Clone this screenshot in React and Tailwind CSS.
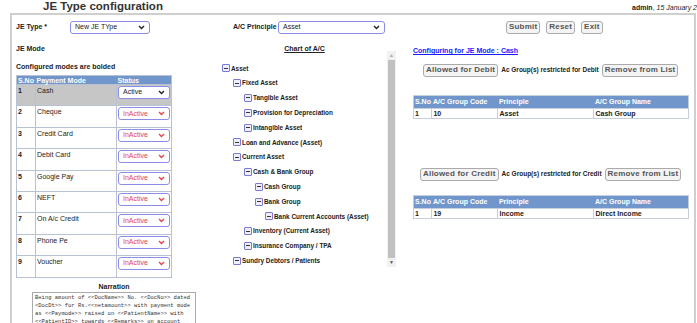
import React from 'react';

const modes = [
  { no: 1, name: 'Cash', status: 'Active' },
  { no: 2, name: 'Cheque', status: 'InActive' },
  { no: 3, name: 'Credit Card', status: 'InActive' },
  { no: 4, name: 'Debit Card', status: 'InActive' },
  { no: 5, name: 'Google Pay', status: 'InActive' },
  { no: 6, name: 'NEFT', status: 'InActive' },
  { no: 7, name: 'On A/c Credit', status: 'InActive' },
  { no: 8, name: 'Phone Pe', status: 'InActive' },
  { no: 9, name: 'Voucher', status: 'InActive' },
];

const tree = [
  ['Asset', 0],
  ['Fixed Asset', 1],
  ['Tangible Asset', 2],
  ['Provision for Depreciation', 2],
  ['Intangible Asset', 2],
  ['Loan and Advance (Asset)', 1],
  ['Current Asset', 1],
  ['Cash & Bank Group', 2],
  ['Cash Group', 3],
  ['Bank Group', 3],
  ['Bank Current Accounts (Asset)', 4],
  ['Inventory (Current Asset)', 2],
  ['Insurance Company / TPA', 2],
  ['Sundry Debtors / Patients', 1],
];

const indents = ['pl-[3px]', 'pl-[14px]', 'pl-[25px]', 'pl-[36px]', 'pl-[46px]'];

const Chevron = ({ color }) => (
  <svg width="7" height="5" viewBox="0 0 7 5">
    <path d="M1 1l2.5 2.5L6 1" fill="none" stroke={color} strokeWidth="1.4" />
  </svg>
);

const Select = ({ value, width, red }) => (
  <div
    className={`${width} h-[13px] flex items-center justify-between px-[4px] border-[1.5px] border-[#8c8ce6] rounded-[3px] bg-white`}
  >
    <span className={red ? 'text-[#e8434b] text-[7px]' : 'text-[#222] text-[7px]'}>{value}</span>
    <Chevron color={red ? '#e8434b' : '#222'} />
  </div>
);

const Btn = ({ children }) => (
  <span className="inline-flex items-center whitespace-nowrap h-[13px] px-[2px] border border-[#aaa] rounded-[3px] bg-[#f4f4f4] text-[#555] font-bold text-[8px] tracking-[0.2px]">
    {children}
  </span>
);

const Minus = () => (
  <span className="w-[8px] h-[8px] mr-[1px] border border-[#7a7ad0] rounded-[1px] bg-[#eef] flex items-center justify-center shrink-0">
    <span className="w-[4px] h-[1px] bg-[#333]" />
  </span>
);

const GroupTable = ({ row }) => (
  <table className="w-[276px] border-collapse border border-[#c8cfdc] text-[7px]">
    <thead>
      <tr className="bg-[#7096cb] text-white font-bold h-[13px] text-left">
        <th className="w-[17px] px-[1px]">S.No</th>
        <th className="w-[66px] px-[1px]">A/C Group Code</th>
        <th className="w-[96px] px-[1px]">Principle</th>
        <th className="px-[1px]">A/C Group Name</th>
      </tr>
    </thead>
    <tbody>
      <tr className="h-[10px] font-bold text-[#222]">
        {row.map((c, i) => (
          <td key={i} className="px-[1px] border border-[#c8cfdc] leading-none">{c}</td>
        ))}
      </tr>
    </tbody>
  </table>
);

export default function App() {
  return (
    <div className="w-[697px] h-[323px] overflow-hidden bg-white text-[#222] text-[7px] font-['Liberation_Sans',Arial,sans-serif]">
      <div className="flex items-start h-[13px] overflow-hidden">
        <h1 className="ml-[43px] w-[589px] shrink-0 text-[11.5px] font-bold text-[#333] leading-[12px]">JE Type configuration</h1>
        <div className="mt-[3px] whitespace-nowrap text-[7px] shrink-0">
          <b>admin</b>, <i>15 January 2025</i>
        </div>
      </div>

      <div className="ml-[10px] w-[686px] h-[320px] border-t-2 border-l-2 border-r-2 border-[#cfcfcf] pl-[4px]">
        <div className="flex items-center mt-[5px] h-[14px]">
          <span className="w-[54px] font-bold">JE Type *</span>
          <Select value="New JE TYpe" width="w-[80px]" />
          <span className="ml-[83px] w-[45px] font-bold">A/C Principle</span>
          <Select value="Asset" width="w-[107px]" />
          <div className="ml-[121px] flex gap-[6px]">
            <Btn>Submit</Btn>
            <Btn>Reset</Btn>
            <Btn>Exit</Btn>
          </div>
        </div>

        <div className="flex mt-[11px]">
          <div className="w-[203px]">
            <div className="font-bold h-[8px] leading-[8px]">JE Mode</div>
            <div className="font-bold mt-[10px] h-[8px] leading-[8px]">Configured modes are bolded</div>
            <table className="mt-[4px] w-[156px] border-collapse border border-[#b9c2d2]">
              <thead>
                <tr className="bg-[#7096cb] text-white font-bold h-[9px] text-left leading-none">
                  <th className="w-[19px] px-[1px]">S.No</th>
                  <th className="w-[81px] px-[1px]">Payment Mode</th>
                  <th className="px-[1px]">Status</th>
                </tr>
              </thead>
              <tbody>
                {modes.map((m) => (
                  <tr key={m.no} className={m.no === 1 ? 'bg-[#c6c6c6] h-[21.4px]' : 'h-[21.4px]'}>
                    <td className="align-top px-[1px] pt-[2px] font-bold border border-[#b9c2d2] leading-none">{m.no}</td>
                    <td className="align-top px-[1px] pt-[2px] border border-[#b9c2d2] leading-none">{m.name}</td>
                    <td className="align-top px-[1px] pt-[1px] border border-[#b9c2d2]">
                      <Select value={m.status} width="w-[52px]" red={m.status === 'InActive'} />
                    </td>
                  </tr>
                ))}
              </tbody>
            </table>
            <div className="ml-[16px] w-[164px] mt-[5px]">
              <div className="text-center font-bold h-[8px] leading-[8px]">Narration</div>
              <div className="mt-[1px] h-[40px] border border-[#aaa] px-[2px] pt-[1px] font-['Liberation_Mono',monospace] text-[5.5px] leading-[8px] text-[#333] whitespace-pre">
                {'Being amount of <<DocName>> No. <<DocNo>> dated\n<DocDt>> for Rs.<<netamount>> with payment mode\nas <<Paymode>> raised on <<PatientName>> with\n<<PatientID>> towards <<Remarks>> on account'}
              </div>
            </div>
          </div>

          <div className="w-[177px] flex h-[222px]">
            <div className="flex-1">
              <div className="text-center font-bold underline h-[8px] leading-[8px] pl-[3px]">Chart of A/C</div>
              <div className="mt-[8px] text-[6.4px]">
                {tree.map(([label, lvl]) => (
                  <div key={label} className={`${indents[lvl]} h-[14.8px] flex items-center font-bold whitespace-nowrap`}>
                    <Minus />
                    {label}
                  </div>
                ))}
              </div>
            </div>
            <div className="w-[9px] mt-[6px] h-[216px] bg-[#f1f1f1] flex flex-col items-center">
              <div className="h-[9px] flex items-center text-[#aaa] text-[5px]">▲</div>
              <div className="w-[7px] flex-1 bg-[#c1c1c1]" />
              <div className="h-[9px] flex items-center text-[#555] text-[5px]">▼</div>
            </div>
          </div>

          <div className="ml-[17px] w-[276px]">
            <div className="font-bold underline text-[#1a1aff] h-[8px] leading-[8px] mt-[2px]">Configuring for JE Mode : Cash</div>
            <div className="flex items-center gap-[3px] mt-[8px] ml-[10px] h-[14px]">
              <Btn>Allowed for Debit</Btn>
              <span className="font-bold text-[6.5px] whitespace-nowrap">Ac Group(s) restricted for Debit</span>
              <Btn>Remove from List</Btn>
            </div>
            <div className="mt-[18px]">
              <GroupTable row={['1', '10', 'Asset', 'Cash Group']} />
            </div>
            <div className="flex items-center gap-[3px] mt-[48px] ml-[7px] h-[14px]">
              <Btn>Allowed for Credit</Btn>
              <span className="font-bold text-[6.5px] whitespace-nowrap">Ac Group(s) restricted for Credit</span>
              <Btn>Remove from List</Btn>
            </div>
            <div className="mt-[14px]">
              <GroupTable row={['1', '19', 'Income', 'Direct Income']} />
            </div>
          </div>
        </div>
      </div>
    </div>
  );
}
